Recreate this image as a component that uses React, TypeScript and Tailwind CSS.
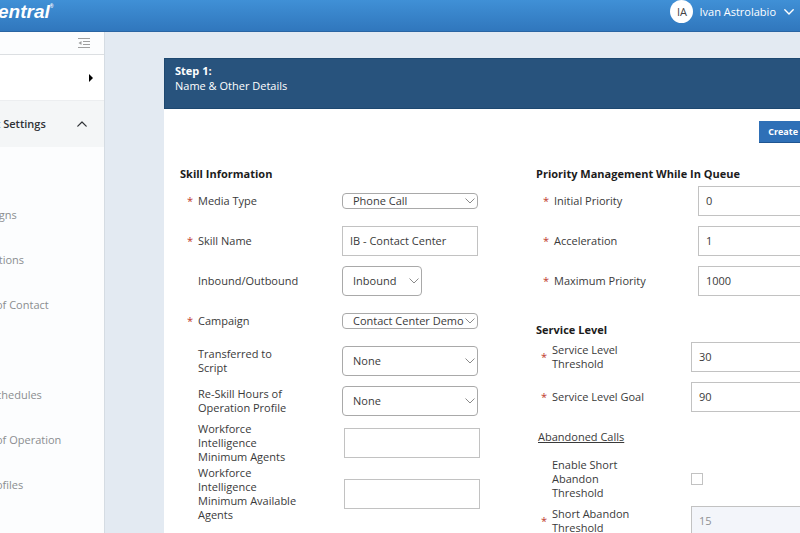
import { useId } from 'react'
import type { ReactNode } from 'react'

// empty entries keep the 45px rhythm of the menu
const menuItems = ['', 'igns', 'itions', 'of Contact', '', 'chedules', 'of Operation', 'ofiles']

function Chevron({ className }: { className: string }) {
  return (
    <svg className={className} viewBox="0 0 10 6" fill="none" stroke="currentColor" strokeLinecap="round" strokeLinejoin="round">
      <path d="M0.8 0.8L5 5l4.2-4.2" />
    </svg>
  )
}

function Field({ id, label, required, side, children }: {
  id: string
  label: string
  required?: boolean
  side: 'left' | 'priority' | 'service'
  children: ReactNode
}) {
  const labelBox = {
    left: 'ml-[18px] w-[144px] pr-10',
    priority: 'ml-[18px] w-[144px] pr-10',
    service: 'ml-4 w-[139px] pr-10',
  }[side]

  return (
    <div className="flex min-h-10 items-center py-px">
      <label htmlFor={id} className={`relative shrink-0 ${labelBox}`}>
        {required && (
          <span className="absolute top-1/2 -left-[11px] -translate-y-1/2 text-[#c0392b]">*</span>
        )}
        {label}
      </label>
      {children}
    </div>
  )
}

function TextField({ label, value = '', required, side = 'left', disabled }: {
  label: string
  value?: string
  required?: boolean
  side?: 'left' | 'priority' | 'service'
  disabled?: boolean
}) {
  const id = useId()
  const box = {
    left: value ? 'w-[136px]' : 'ml-0.5 w-[136px]',
    priority: 'min-w-0 flex-1 border-r-0',
    service: 'min-w-0 flex-1 border-r-0',
  }[side]

  return (
    <Field id={id} label={label} required={required} side={side}>
      <input
        id={id}
        type="text"
        defaultValue={value}
        disabled={disabled}
        className={`h-[30px] border border-[#c2c2c2] bg-white px-[7px] pb-0.5 disabled:bg-[#f3f5fa] disabled:text-[#8f9194] ${box}`}
      />
    </Field>
  )
}

function SelectField({ label, value, required, size = 'normal' }: {
  label: string
  value: string
  required?: boolean
  size?: 'normal' | 'thin' | 'narrow'
}) {
  const id = useId()
  const box = {
    normal: 'h-[30px] w-[136px]',
    thin: 'h-4 w-[136px]',
    narrow: 'h-[30px] w-[80px]',
  }[size]

  return (
    <Field id={id} label={label} required={required} side="left">
      <div className="relative">
        <select
          id={id}
          className={`block appearance-none rounded border border-[#a9a9a9] bg-white pl-2.5 ${box}`}
        >
          <option>{value}</option>
        </select>
        <Chevron className="pointer-events-none absolute top-1/2 right-[3px] h-1.5 w-2.5 -translate-y-1/2 text-[#8a8a8a]" />
      </div>
    </Field>
  )
}

export default function App() {
  const abandonId = useId()

  return (
    <div className="flex h-screen flex-col overflow-hidden bg-[#e3eaf2] font-['Open_Sans',sans-serif] text-[11px] leading-[14px] text-[#3a3a3a]">
      <header className="flex h-8 shrink-0 items-center justify-between border-b border-[#2a65a3] bg-linear-to-b from-[#4090d6] to-[#3077bd] pb-2 text-white">
        <div className="-ml-0.5 flex items-start font-['Liberation_Sans',sans-serif] text-[19px] leading-6 font-bold italic">
          entral
          <span className="text-[5px] leading-3 not-italic">®</span>
        </div>
        <button className="flex items-center pr-1.5">
          <span className="mr-1.5 flex size-[23px] items-center justify-center rounded-full bg-white text-[#444]">IA</span>
          <span className="font-medium">Ivan Astrolabio</span>
          <Chevron className="ml-2 h-1.5 w-2.5 stroke-[1.4]" />
        </button>
      </header>

      <div className="flex min-h-0 flex-1">
        <aside className="flex w-[105px] shrink-0 flex-col overflow-hidden border-r border-[#d5dce3] bg-[#fcfdfe]">
          <div className="flex h-[23px] shrink-0 items-center justify-end border-b border-[#dcdfe2] pr-3.5">
            <button aria-label="Collapse menu" className="text-[#a0a0a0]">
              <svg className="h-2.5 w-3" viewBox="0 0 12 10" fill="none" stroke="currentColor">
                <path d="M0 0.5h12M5 3.5h7M5 6.5h7M0 9.5h12" />
                <path d="M3.5 3L0.5 5l3 2z" fill="currentColor" stroke="none" />
              </svg>
            </button>
          </div>
          <div className="flex h-[46px] shrink-0 items-center justify-end border-b border-[#eceef0] bg-white pr-[11px]">
            <button aria-label="Expand" className="text-black">
              <svg className="h-2 w-1" viewBox="0 0 4 8" fill="currentColor">
                <path d="M0 0l4 4-4 4z" />
              </svg>
            </button>
          </div>
          <button className="flex h-[46px] shrink-0 items-center justify-between bg-[#f4f6f7] pr-[17px] font-semibold text-[#2f3236]">
            <span className="-ml-1">t Settings</span>
            <Chevron className="h-1.5 w-2.5 rotate-180 stroke-[1.2]" />
          </button>
          <nav>
            {menuItems.map((item, i) => (
              <div key={i} className="-ml-1 flex h-[45px] items-center">
                {item && <a href="#" className="whitespace-nowrap text-[#8b8d90]">{item}</a>}
              </div>
            ))}
          </nav>
        </aside>

        <main className="min-w-0 flex-1 pt-[26px] pl-[59px]">
          <section className="min-h-full bg-white">
            <div className="h-[51px] border border-r-0 border-[#1e4870] bg-[#28537d] px-2.5 pt-1 text-white">
              <h1 className="leading-[15px] font-bold">Step 1:</h1>
              <p className="leading-[15px] font-medium">Name &amp; Other Details</p>
            </div>

            <div className="flex justify-end pt-3">
              <button className="h-[22px] border-b border-[#1f5591] bg-[#2f70b7] pr-0.5 pl-[9px] text-[9px] font-bold text-white">Create</button>
            </div>

            <form className="flex pt-6 pl-4">
              <div className="w-[356px] shrink-0">
                <h2 className="font-bold text-[#1c1c1c]">Skill Information</h2>
                <SelectField label="Media Type" value="Phone Call" size="thin" required />
                <TextField label="Skill Name" value="IB - Contact Center" required />
                <SelectField label="Inbound/Outbound" value="Inbound" size="narrow" />
                <SelectField label="Campaign" value="Contact Center Demo" size="thin" required />
                <SelectField label="Transferred to Script" value="None" />
                <SelectField label="Re-Skill Hours of Operation Profile" value="None" />
                <TextField label="Workforce Intelligence Minimum Agents" />
                <TextField label="Workforce Intelligence Minimum Available Agents" />
              </div>

              <div className="min-w-0 flex-1">
                <h2 className="whitespace-nowrap font-bold text-[#1c1c1c]">Priority Management While In Queue</h2>
                <TextField label="Initial Priority" value="0" side="priority" required />
                <TextField label="Acceleration" value="1" side="priority" required />
                <TextField label="Maximum Priority" value="1000" side="priority" required />

                <h2 className="pt-[22px] font-bold text-[#1c1c1c]">Service Level</h2>
                <TextField label="Service Level Threshold" value="30" side="service" required />
                <TextField label="Service Level Goal" value="90" side="service" required />
                <h3 className="flex h-10 items-center pl-0.5 underline">Abandoned Calls</h3>
                <Field id={abandonId} label="Enable Short Abandon Threshold" side="service">
                  <input id={abandonId} type="checkbox" className="size-3 appearance-none border border-[#c2c2c2] bg-white checked:bg-[#2f70b7]" />
                </Field>
                <TextField label="Short Abandon Threshold" value="15" side="service" required disabled />
              </div>
            </form>
          </section>
        </main>
      </div>
    </div>
  )
}
